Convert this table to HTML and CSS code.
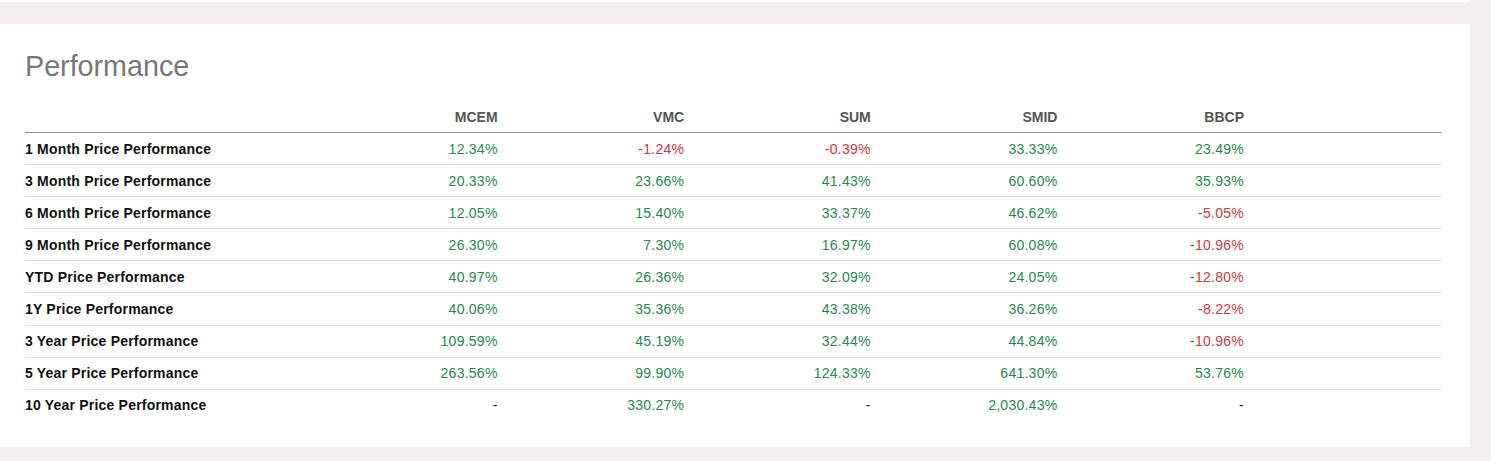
FILE: index.html
```html
<!DOCTYPE html>
<html lang="en">
<head>
<meta charset="utf-8">
<title>Performance</title>
<link rel="stylesheet" href="styles.css">
</head>
<body>
<div class="page">
  <div class="main">
    <div class="topline"></div>
    <div class="band"></div>
    <section class="panel">
      <h2 class="title">Performance</h2>
      <table class="perf">
        <colgroup>
          <col class="c-label">
          <col class="c-val"><col class="c-val"><col class="c-val"><col class="c-val"><col class="c-val">
          <col>
        </colgroup>
        <thead>
          <tr><th></th><th>MCEM</th><th>VMC</th><th>SUM</th><th>SMID</th><th>BBCP</th><th></th></tr>
        </thead>
        <tbody>
          <tr><td>1 Month Price Performance</td><td class="up">12.34%</td><td class="down">-1.24%</td><td class="down">-0.39%</td><td class="up">33.33%</td><td class="up">23.49%</td><td></td></tr>
          <tr><td>3 Month Price Performance</td><td class="up">20.33%</td><td class="up">23.66%</td><td class="up">41.43%</td><td class="up">60.60%</td><td class="up">35.93%</td><td></td></tr>
          <tr><td>6 Month Price Performance</td><td class="up">12.05%</td><td class="up">15.40%</td><td class="up">33.37%</td><td class="up">46.62%</td><td class="down">-5.05%</td><td></td></tr>
          <tr><td>9 Month Price Performance</td><td class="up">26.30%</td><td class="up">7.30%</td><td class="up">16.97%</td><td class="up">60.08%</td><td class="down">-10.96%</td><td></td></tr>
          <tr><td>YTD Price Performance</td><td class="up">40.97%</td><td class="up">26.36%</td><td class="up">32.09%</td><td class="up">24.05%</td><td class="down">-12.80%</td><td></td></tr>
          <tr><td>1Y Price Performance</td><td class="up">40.06%</td><td class="up">35.36%</td><td class="up">43.38%</td><td class="up">36.26%</td><td class="down">-8.22%</td><td></td></tr>
          <tr><td>3 Year Price Performance</td><td class="up">109.59%</td><td class="up">45.19%</td><td class="up">32.44%</td><td class="up">44.84%</td><td class="down">-10.96%</td><td></td></tr>
          <tr><td>5 Year Price Performance</td><td class="up">263.56%</td><td class="up">99.90%</td><td class="up">124.33%</td><td class="up">641.30%</td><td class="up">53.76%</td><td></td></tr>
          <tr><td>10 Year Price Performance</td><td class="na">-</td><td class="up">330.27%</td><td class="na">-</td><td class="up">2,030.43%</td><td class="na">-</td><td></td></tr>
        </tbody>
      </table>
    </section>
  </div>
</div>
</body>
</html>
```
FILE: styles.css
```css
html, body {
  margin: 0;
  padding: 0;
}
body {
  background: #f4f0ef;
  font-family: "Liberation Sans", Arial, sans-serif;
  height: 461px;
  overflow: hidden;
}
.page {
  display: flex;
}
.main {
  width: 1470px;
  flex: none;
}
.topline {
  height: 2px;
  background: #ffffff;
}
.band {
  height: 22px;
}
.panel {
  background: #ffffff;
  padding: 26px 29px 26px 25px;
}
.title {
  margin: 0 0 26px 0;
  font-size: 28.7px;
  line-height: 33px;
  font-weight: normal;
  color: #777777;
}
.perf {
  width: 100%;
  border-collapse: collapse;
  table-layout: fixed;
  font-size: 14px;
  line-height: 16px;
}
.c-label { width: 286px; }
.c-val { width: 186.6px; }
.perf th {
  text-align: right;
  font-weight: bold;
  color: #555555;
  padding: 0 0 7px 0;
  border-bottom: 1px solid #888888;
}
.perf td {
  text-align: right;
  padding: 7.55px 0;
  border-bottom: 1px solid #dddddd;
  letter-spacing: 0.25px;
}
.perf td.up, .perf td.down {
  margin-right: 0;
}
.perf tbody tr:last-child td {
  border-bottom: none;
}
.perf td:first-child {
  text-align: left;
  font-weight: bold;
  color: #111111;
  letter-spacing: 0.2px;
}
.perf .up { color: #1e8a4e; }
.perf .down { color: #d0343a; }
.perf .na { color: #222222; }
```
